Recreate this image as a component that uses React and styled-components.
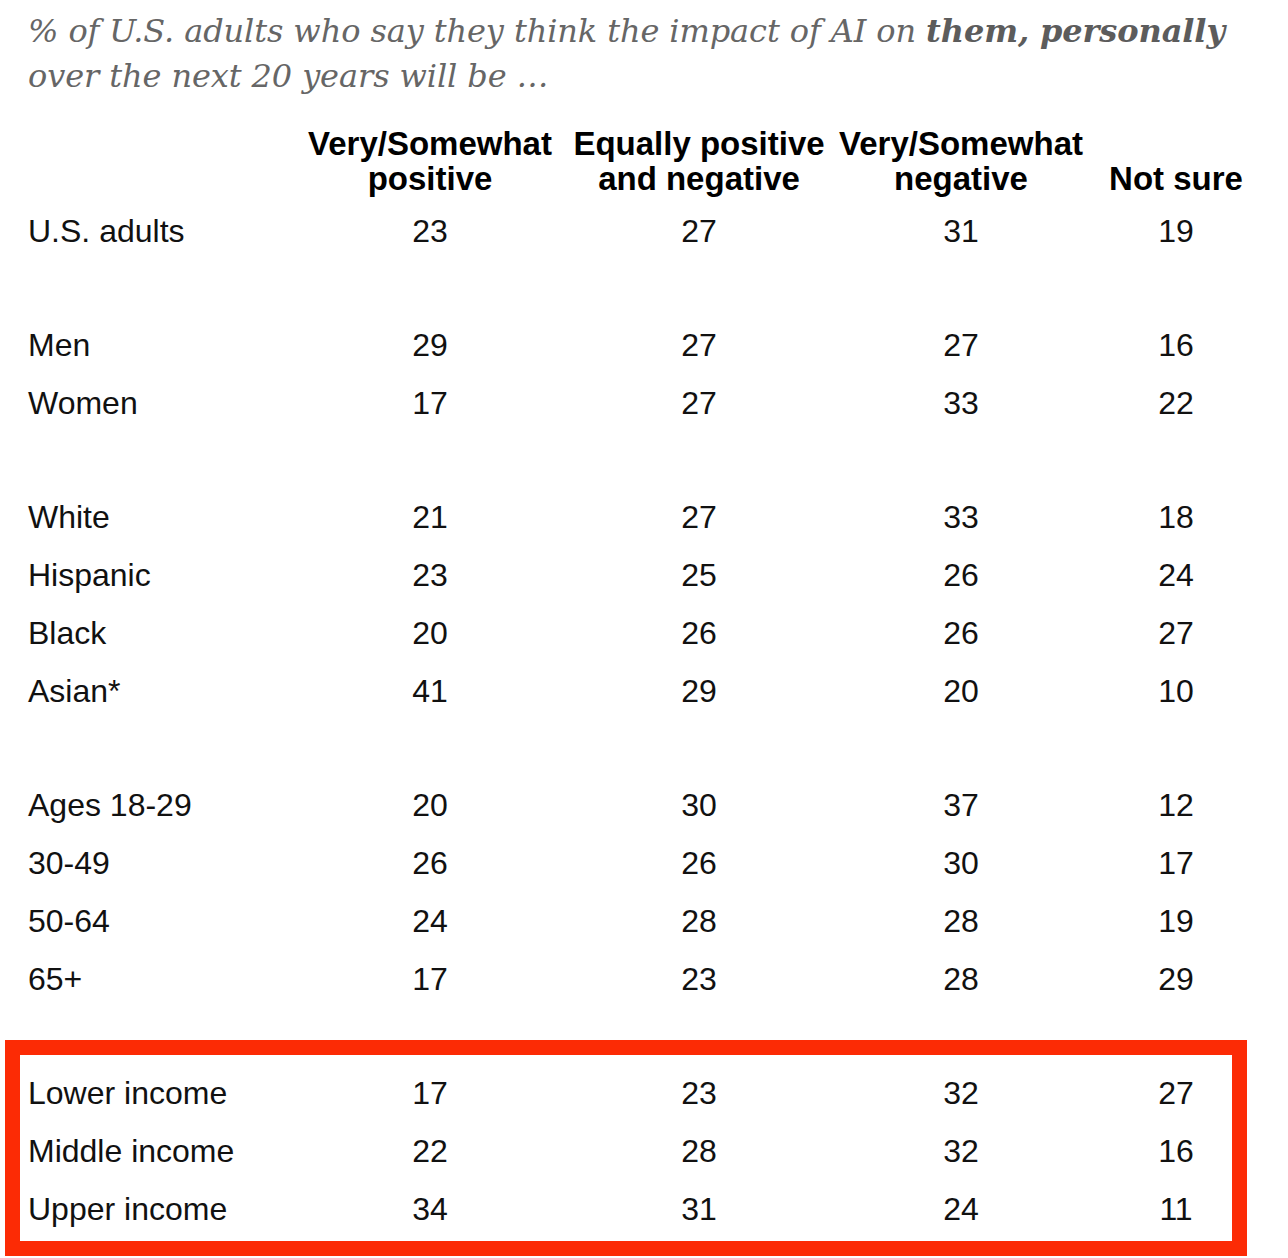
import styled, { createGlobalStyle } from 'styled-components';

const GlobalStyle = createGlobalStyle`
  html, body {
    margin: 0;
    padding: 0;
    background: #fff;
  }
  body {
    font-family: 'Liberation Sans', Arial, sans-serif;
    color: #111;
  }
`;

const groups = [
  [['U.S. adults', 23, 27, 31, 19]],
  [
    ['Men', 29, 27, 27, 16],
    ['Women', 17, 27, 33, 22],
  ],
  [
    ['White', 21, 27, 33, 18],
    ['Hispanic', 23, 25, 26, 24],
    ['Black', 20, 26, 26, 27],
    ['Asian*', 41, 29, 20, 10],
  ],
  [
    ['Ages 18-29', 20, 30, 37, 12],
    ['30-49', 26, 26, 30, 17],
    ['50-64', 24, 28, 28, 19],
    ['65+', 17, 23, 28, 29],
  ],
];

const income = [
  ['Lower income', 17, 23, 32, 27],
  ['Middle income', 22, 28, 32, 16],
  ['Upper income', 34, 31, 24, 11],
];

function DataRow({ row }) {
  const [label, ...values] = row;
  return (
    <Row>
      <Label>{label}</Label>
      {values.map((v, i) => (
        <Cell key={i}>{v}</Cell>
      ))}
    </Row>
  );
}

export default function App() {
  return (
    <Page>
      <GlobalStyle />
      <Title>
        % of U.S. adults who say they think the impact of AI on{' '}
        <strong>them, personally</strong>
        <br />
        over the next 20 years will be …
      </Title>

      <Table>
        <HeadRow>
          <span />
          <HeadCell>
            Very/Somewhat
            <br />
            positive
          </HeadCell>
          <HeadCell>
            Equally positive
            <br />
            and negative
          </HeadCell>
          <HeadCell>
            Very/Somewhat
            <br />
            negative
          </HeadCell>
          <HeadCell>
            <br />
            Not sure
          </HeadCell>
        </HeadRow>

        {groups.map((g, i) => (
          <Group key={i} $first={i === 0}>
            {g.map((row) => (
              <DataRow key={row[0]} row={row} />
            ))}
          </Group>
        ))}

        <Highlight>
          {income.map((row) => (
            <DataRow key={row[0]} row={row} />
          ))}
        </Highlight>
      </Table>
    </Page>
  );
}

const Page = styled.div`
  width: 1288px;
  height: 1258px;
  padding-top: 9px;
  box-sizing: border-box;
  overflow: hidden;
`;

const Title = styled.p`
  margin: 0;
  padding: 0 28px;
  font-family: 'DejaVu Serif', Georgia, serif;
  font-style: italic;
  font-size: 32px;
  line-height: 45px;
  letter-spacing: -0.1px;
  color: #666;
  white-space: nowrap;

  strong {
    font-weight: bold;
    color: #5c5c5c;
  }
`;

const Table = styled.div`
  margin-top: 27px;
  padding-left: 28px;
`;

const cols = '275px 254px 284px 240px 190px';

const HeadRow = styled.div`
  display: grid;
  grid-template-columns: ${cols};
  font-size: 33px;
  line-height: 35px;
  font-weight: bold;
  color: #000;
`;

const HeadCell = styled.div`
  justify-self: center;
  text-align: center;
  white-space: nowrap;
`;

const Group = styled.div`
  margin-top: ${(p) => (p.$first ? '6px' : '56px')};
`;

const Row = styled.div`
  display: grid;
  grid-template-columns: ${cols};
  height: 58px;
  font-size: 32px;
  line-height: 58px;
`;

const Label = styled.div`
  white-space: nowrap;
`;

const Cell = styled.div`
  text-align: center;
`;

const Highlight = styled.div`
  box-sizing: border-box;
  width: 1242px;
  margin: 32px 0 0 -23px;
  padding: 9px 0 3px 8px;
  border: 15px solid #fc2b05;
`;
